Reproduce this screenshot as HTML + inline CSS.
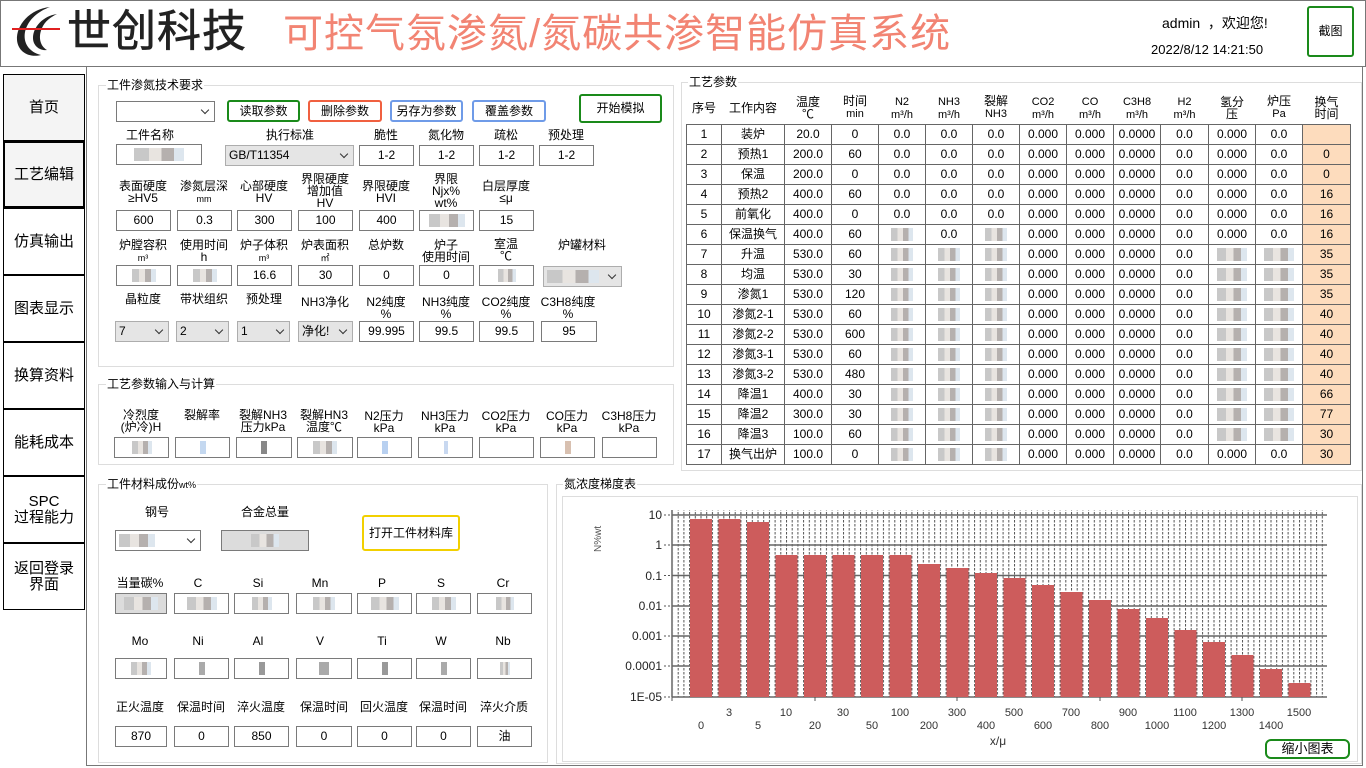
<!DOCTYPE html>
<html><head><meta charset="utf-8">
<style>
*{box-sizing:border-box;margin:0;padding:0}
body{width:1366px;height:768px;background:#fff;position:relative;overflow:hidden;font-family:"Liberation Sans","Noto Sans CJK SC",sans-serif;font-size:12px;color:#000}
.a{position:absolute}
.nav{position:absolute;left:3px;width:82px;border:1px solid #000;background:#fff;display:flex;align-items:center;justify-content:center;text-align:center;font-size:15px;line-height:16px}
.grp{position:absolute;border:1px solid #ddd}
.gt{position:absolute;top:-8px;left:7px;background:#fff;padding:0 1px;font-size:12px;line-height:14px}
.l{position:absolute;text-align:center;font-size:12px;line-height:12px;width:80px}
.i{position:absolute;border:1px solid #7a7a7a;background:#fff;text-align:center;font-size:12px;height:21px;line-height:19px}
.c{position:absolute;border:1px solid #adadad;background:#e5e5e5;font-size:12px;height:21px;line-height:19px;padding-left:3px}
.c:after{content:"";position:absolute;right:6px;top:5px;width:5px;height:5px;border-right:1px solid #333;border-bottom:1px solid #333;transform:rotate(45deg)}
.cw{background:#fff;border-color:#7a7a7a}
.btn{position:absolute;border:2px solid;border-radius:3px;background:#fff;text-align:center;font-size:12px}
.bl{display:inline-block;width:22px;height:13px;vertical-align:middle;background:linear-gradient(90deg,#c8c8c8 0 30%,#e8e4e0 30% 55%,#b5b0ae 55% 80%,#dde6ee 80%)}
table{border-collapse:collapse}
td{border:1px solid #666;height:20px;text-align:center;font-size:12px;padding:0;line-height:18px}
th{font-weight:normal;font-size:12px;line-height:12px;height:32px;text-align:center;vertical-align:middle}
th small{font-size:11px}
td.p{background:#fddcbd}
</style></head><body>

<div class="a" style="left:0;top:0;width:1366px;height:67px;border:1px solid #777"></div>
<svg class="a" style="left:10px;top:5px" width="56" height="54" viewBox="0 0 56 54">
<path d="M40 2 C20 4 6 20 7 35 C8 47 19 53 31 50 C19 47 13 38 15 27 C18 14 29 6 40 2Z" fill="#222"/>
<path d="M47 9 C33 11 23 22 23 33 C23 41 30 46 37 45 C30 41 28 32 32 23 C35 16 41 12 47 9Z" fill="#222"/>
<rect x="2" y="23" width="48" height="2" fill="#e02020"/>
</svg>
<div class="a" style="left:67px;top:7px;font-size:44px;line-height:50px;letter-spacing:1px;color:#222;-webkit-text-stroke:0.6px #222">世创科技</div>
<div class="a" style="left:283px;top:10px;font-size:40px;line-height:48px;letter-spacing:1px;color:#f28473">可控气氛渗氮/氮碳共渗智能仿真系统</div>
<div class="a" style="left:1162px;top:13px;font-size:14px">admin &nbsp;，欢迎您!</div>
<div class="a" style="left:1151px;top:42px;font-size:13px">2022/8/12 14:21:50</div>
<div class="btn" style="left:1307px;top:6px;width:47px;height:51px;border-color:#1a8a1a;line-height:47px;font-size:12px">截图</div>

<div class="a" style="left:86px;top:67px;width:1277px;height:699px;border-left:1px solid #777;border-right:1px solid #777;border-bottom:1px solid #777"></div>
<div class="nav" style="top:74px;height:67px;background:#f4f4f4">首页</div>
<div class="nav" style="top:141px;height:67px;background:#f4f4f4;border:2px solid #000">工艺编辑</div>
<div class="nav" style="top:208px;height:67px">仿真输出</div>
<div class="nav" style="top:275px;height:67px">图表显示</div>
<div class="nav" style="top:342px;height:67px">换算资料</div>
<div class="nav" style="top:409px;height:67px">能耗成本</div>
<div class="nav" style="top:476px;height:67px">SPC<br>过程能力</div>
<div class="nav" style="top:543px;height:67px">返回登录<br>界面</div>

<div class="grp" style="left:98px;top:85px;width:576px;height:282px"><div class="gt">工件渗氮技术要求</div></div>
<div class="c cw" style="left:116px;top:101px;width:99px"></div>
<div class="btn" style="left:227px;top:100px;width:73px;height:22px;border-color:#1a8a1a;line-height:18px">读取参数</div>
<div class="btn" style="left:308px;top:100px;width:74px;height:22px;border-color:#f06040;line-height:18px">删除参数</div>
<div class="btn" style="left:390px;top:100px;width:73px;height:22px;border-color:#6f9be8;line-height:18px">另存为参数</div>
<div class="btn" style="left:472px;top:100px;width:74px;height:22px;border-color:#6f9be8;line-height:18px">覆盖参数</div>
<div class="btn" style="left:579px;top:94px;width:83px;height:29px;border-color:#1a8a1a;line-height:25px">开始模拟</div>

<div class="l" style="left:110px;top:129px">工件名称</div>
<div class="l" style="left:250px;top:129px">执行标准</div>
<div class="l" style="left:346px;top:129px">脆性</div>
<div class="l" style="left:406px;top:129px">氮化物</div>
<div class="l" style="left:466px;top:129px">疏松</div>
<div class="l" style="left:526px;top:129px">预处理</div>
<div class="i" style="left:116px;top:144px;width:86px"><span class="bl" style="width:50px"></span></div>
<div class="c" style="left:225px;top:145px;width:129px;text-align:left">GB/T11354</div>
<div class="i" style="left:359px;top:145px;width:55px">1-2</div>
<div class="i" style="left:419px;top:145px;width:55px">1-2</div>
<div class="i" style="left:479px;top:145px;width:55px">1-2</div>
<div class="i" style="left:539px;top:145px;width:55px">1-2</div>

<div class="l" style="left:103px;top:180px">表面硬度<br>≥HV5</div>
<div class="l" style="left:164px;top:180px">渗氮层深<br><small style="font-size:9px">mm</small></div>
<div class="l" style="left:224px;top:180px">心部硬度<br>HV</div>
<div class="l" style="left:285px;top:173px">界限硬度<br>增加值<br>HV</div>
<div class="l" style="left:346px;top:180px">界限硬度<br>HVI</div>
<div class="l" style="left:406px;top:173px">界限<br>Njx%<br>wt%</div>
<div class="l" style="left:466px;top:180px">白层厚度<br>≤μ</div>
<div class="i" style="left:116px;top:210px;width:55px">600</div>
<div class="i" style="left:177px;top:210px;width:55px">0.3</div>
<div class="i" style="left:237px;top:210px;width:55px">300</div>
<div class="i" style="left:298px;top:210px;width:55px">100</div>
<div class="i" style="left:359px;top:210px;width:55px">400</div>
<div class="i" style="left:419px;top:210px;width:55px"><span class="bl" style="width:36px"></span></div>
<div class="i" style="left:479px;top:210px;width:55px">15</div>

<div class="l" style="left:103px;top:239px">炉膛容积<br><small style="font-size:9px">m³</small></div>
<div class="l" style="left:164px;top:239px">使用时间<br>h</div>
<div class="l" style="left:224px;top:239px">炉子体积<br><small style="font-size:9px">m³</small></div>
<div class="l" style="left:285px;top:239px">炉表面积<br><small style="font-size:9px">㎡</small></div>
<div class="l" style="left:346px;top:239px">总炉数</div>
<div class="l" style="left:406px;top:239px">炉子<br>使用时间</div>
<div class="l" style="left:466px;top:238px">室温<br>℃</div>
<div class="l" style="left:542px;top:239px">炉罐材料</div>
<div class="i" style="left:116px;top:265px;width:55px"><span class="bl" style="width:24px"></span></div>
<div class="i" style="left:177px;top:265px;width:55px"><span class="bl" style="width:24px"></span></div>
<div class="i" style="left:237px;top:265px;width:55px">16.6</div>
<div class="i" style="left:298px;top:265px;width:55px">30</div>
<div class="i" style="left:359px;top:265px;width:55px">0</div>
<div class="i" style="left:419px;top:265px;width:55px">0</div>
<div class="i" style="left:479px;top:265px;width:55px"><span class="bl" style="width:18px"></span></div>
<div class="c" style="left:543px;top:266px;width:79px"><span class="bl" style="width:52px"></span></div>

<div class="l" style="left:103px;top:293px">晶粒度</div>
<div class="l" style="left:164px;top:293px">带状组织</div>
<div class="l" style="left:224px;top:293px">预处理</div>
<div class="l" style="left:285px;top:296px">NH3净化</div>
<div class="l" style="left:346px;top:296px">N2纯度<br>%</div>
<div class="l" style="left:406px;top:296px">NH3纯度<br>%</div>
<div class="l" style="left:466px;top:296px">CO2纯度<br>%</div>
<div class="l" style="left:528px;top:296px">C3H8纯度<br>%</div>
<div class="c" style="left:115px;top:321px;width:54px">7</div>
<div class="c" style="left:176px;top:321px;width:53px">2</div>
<div class="c" style="left:237px;top:321px;width:53px">1</div>
<div class="c" style="left:298px;top:321px;width:55px">净化!</div>
<div class="i" style="left:359px;top:321px;width:55px">99.995</div>
<div class="i" style="left:419px;top:321px;width:55px">99.5</div>
<div class="i" style="left:479px;top:321px;width:55px">99.5</div>
<div class="i" style="left:541px;top:321px;width:56px">95</div>

<div class="grp" style="left:98px;top:384px;width:576px;height:81px"><div class="gt">工艺参数输入与计算</div></div>
<div class="l" style="left:101px;top:409px">冷烈度<br>(炉冷)H</div>
<div class="l" style="left:162px;top:409px">裂解率</div>
<div class="l" style="left:223px;top:409px">裂解NH3<br>压力kPa</div>
<div class="l" style="left:284px;top:409px">裂解HN3<br>温度℃</div>
<div class="l" style="left:344px;top:410px">N2压力<br>kPa</div>
<div class="l" style="left:405px;top:410px">NH3压力<br>kPa</div>
<div class="l" style="left:466px;top:410px">CO2压力<br>kPa</div>
<div class="l" style="left:527px;top:410px">CO压力<br>kPa</div>
<div class="l" style="left:589px;top:410px">C3H8压力<br>kPa</div>
<div class="i" style="left:114px;top:437px;width:55px"><span class="bl" style="width:20px"></span></div>
<div class="i" style="left:175px;top:437px;width:55px"><span class="bl" style="width:6px;background:#c4d8f0"></span></div>
<div class="i" style="left:236px;top:437px;width:56px"><span class="bl" style="width:6px;background:#888"></span></div>
<div class="i" style="left:297px;top:437px;width:56px"><span class="bl" style="width:24px"></span></div>
<div class="i" style="left:357px;top:437px;width:55px"><span class="bl" style="width:6px;background:#b8d0f0"></span></div>
<div class="i" style="left:418px;top:437px;width:55px"><span class="bl" style="width:4px;background:#c8d8f0"></span></div>
<div class="i" style="left:479px;top:437px;width:55px"></div>
<div class="i" style="left:540px;top:437px;width:55px"><span class="bl" style="width:6px;background:#d8c0b0"></span></div>
<div class="i" style="left:602px;top:437px;width:55px"></div>

<div class="grp" style="left:98px;top:484px;width:450px;height:279px"><div class="gt">工件材料成份<small style="font-size:9px">wt%</small></div></div>
<div class="l" style="left:117px;top:506px">钢号</div>
<div class="l" style="left:225px;top:506px">合金总量</div>
<div class="c cw" style="left:115px;top:530px;width:86px"><span class="bl" style="width:36px"></span></div>
<div class="i" style="left:221px;top:530px;width:88px;background:#dcdcdc"><span class="bl" style="width:28px"></span></div>
<div class="btn" style="left:362px;top:515px;width:98px;height:36px;border-color:#f2d000;line-height:32px">打开工件材料库</div>

<div class="l" style="left:100px;top:577px">当量碳%</div>
<div class="l" style="left:158px;top:577px">C</div>
<div class="l" style="left:218px;top:577px">Si</div>
<div class="l" style="left:280px;top:577px">Mn</div>
<div class="l" style="left:342px;top:577px">P</div>
<div class="l" style="left:401px;top:577px">S</div>
<div class="l" style="left:463px;top:577px">Cr</div>
<div class="i" style="left:115px;top:593px;width:52px;background:#dcdcdc"><span class="bl" style="width:34px"></span></div>
<div class="i" style="left:174px;top:593px;width:55px"><span class="bl" style="width:30px"></span></div>
<div class="i" style="left:234px;top:593px;width:55px"><span class="bl" style="width:20px"></span></div>
<div class="i" style="left:296px;top:593px;width:56px"><span class="bl" style="width:22px"></span></div>
<div class="i" style="left:357px;top:593px;width:55px"><span class="bl" style="width:28px"></span></div>
<div class="i" style="left:416px;top:593px;width:55px"><span class="bl" style="width:24px"></span></div>
<div class="i" style="left:477px;top:593px;width:55px"><span class="bl" style="width:18px"></span></div>

<div class="l" style="left:100px;top:635px">Mo</div>
<div class="l" style="left:158px;top:635px">Ni</div>
<div class="l" style="left:218px;top:635px">Al</div>
<div class="l" style="left:280px;top:635px">V</div>
<div class="l" style="left:342px;top:635px">Ti</div>
<div class="l" style="left:401px;top:635px">W</div>
<div class="l" style="left:463px;top:635px">Nb</div>
<div class="i" style="left:115px;top:658px;width:52px"><span class="bl" style="width:20px"></span></div>
<div class="i" style="left:174px;top:658px;width:55px"><span class="bl" style="width:6px;background:#aaa"></span></div>
<div class="i" style="left:234px;top:658px;width:55px"><span class="bl" style="width:6px;background:#999"></span></div>
<div class="i" style="left:296px;top:658px;width:56px"><span class="bl" style="width:10px;background:#aaa"></span></div>
<div class="i" style="left:357px;top:658px;width:55px"><span class="bl" style="width:6px;background:#999"></span></div>
<div class="i" style="left:416px;top:658px;width:55px"><span class="bl" style="width:6px;background:#aaa"></span></div>
<div class="i" style="left:477px;top:658px;width:55px"><span class="bl" style="width:10px"></span></div>

<div class="l" style="left:100px;top:701px">正火温度</div>
<div class="l" style="left:161px;top:701px">保温时间</div>
<div class="l" style="left:221px;top:701px">淬火温度</div>
<div class="l" style="left:284px;top:701px">保温时间</div>
<div class="l" style="left:344px;top:701px">回火温度</div>
<div class="l" style="left:403px;top:701px">保温时间</div>
<div class="l" style="left:464px;top:701px">淬火介质</div>
<div class="i" style="left:115px;top:726px;width:52px">870</div>
<div class="i" style="left:174px;top:726px;width:55px">0</div>
<div class="i" style="left:234px;top:726px;width:55px">850</div>
<div class="i" style="left:296px;top:726px;width:56px">0</div>
<div class="i" style="left:357px;top:726px;width:55px">0</div>
<div class="i" style="left:416px;top:726px;width:55px">0</div>
<div class="i" style="left:477px;top:726px;width:55px">油</div>

<div class="grp" style="left:681px;top:82px;width:681px;height:389px"><div class="gt" style="left:6px">工艺参数</div></div>
<table class="a" style="left:686px;top:92px;width:664px;table-layout:fixed">
<colgroup><col style="width:35px"><col style="width:63px"><col style="width:47px"><col style="width:47px"><col style="width:47px"><col style="width:47px"><col style="width:47px"><col style="width:47px"><col style="width:47px"><col style="width:47px"><col style="width:48px"><col style="width:47px"><col style="width:47px"><col style="width:48px"></colgroup>
<tr><th>序号</th><th>工作内容</th><th>温度<br>℃</th><th>时间<br><small>min</small></th><th><small>N2<br>m³/h</small></th><th><small>NH3<br>m³/h</small></th><th>裂解<br><small>NH3</small></th><th><small>CO2<br>m³/h</small></th><th><small>CO<br>m³/h</small></th><th><small>C3H8<br>m³/h</small></th><th><small>H2<br>m³/h</small></th><th>氢分<br>压</th><th>炉压<br><small>Pa</small></th><th>换气<br>时间</th></tr>
<tr><td>1</td><td>装炉</td><td>20.0</td><td>0</td><td>0.0</td><td>0.0</td><td>0.0</td><td>0.000</td><td>0.000</td><td>0.0000</td><td>0.0</td><td>0.000</td><td>0.0</td><td class="p"></td></tr>
<tr><td>2</td><td>预热1</td><td>200.0</td><td>60</td><td>0.0</td><td>0.0</td><td>0.0</td><td>0.000</td><td>0.000</td><td>0.0000</td><td>0.0</td><td>0.000</td><td>0.0</td><td class="p">0</td></tr>
<tr><td>3</td><td>保温</td><td>200.0</td><td>0</td><td>0.0</td><td>0.0</td><td>0.0</td><td>0.000</td><td>0.000</td><td>0.0000</td><td>0.0</td><td>0.000</td><td>0.0</td><td class="p">0</td></tr>
<tr><td>4</td><td>预热2</td><td>400.0</td><td>60</td><td>0.0</td><td>0.0</td><td>0.0</td><td>0.000</td><td>0.000</td><td>0.0000</td><td>0.0</td><td>0.000</td><td>0.0</td><td class="p">16</td></tr>
<tr><td>5</td><td>前氧化</td><td>400.0</td><td>0</td><td>0.0</td><td>0.0</td><td>0.0</td><td>0.000</td><td>0.000</td><td>0.0000</td><td>0.0</td><td>0.000</td><td>0.0</td><td class="p">16</td></tr>
<tr><td>6</td><td>保温换气</td><td>400.0</td><td>60</td><td><span class="bl"></span></td><td>0.0</td><td><span class="bl"></span></td><td>0.000</td><td>0.000</td><td>0.0000</td><td>0.0</td><td>0.000</td><td>0.0</td><td class="p">16</td></tr>
<tr><td>7</td><td>升温</td><td>530.0</td><td>60</td><td><span class="bl"></span></td><td><span class="bl"></span></td><td><span class="bl"></span></td><td>0.000</td><td>0.000</td><td>0.0000</td><td>0.0</td><td><span class="bl" style="width:30px"></span></td><td><span class="bl" style="width:30px"></span></td><td class="p">35</td></tr>
<tr><td>8</td><td>均温</td><td>530.0</td><td>30</td><td><span class="bl"></span></td><td><span class="bl"></span></td><td><span class="bl"></span></td><td>0.000</td><td>0.000</td><td>0.0000</td><td>0.0</td><td><span class="bl" style="width:30px"></span></td><td><span class="bl" style="width:30px"></span></td><td class="p">35</td></tr>
<tr><td>9</td><td>渗氮1</td><td>530.0</td><td>120</td><td><span class="bl"></span></td><td><span class="bl"></span></td><td><span class="bl"></span></td><td>0.000</td><td>0.000</td><td>0.0000</td><td>0.0</td><td><span class="bl" style="width:30px"></span></td><td><span class="bl" style="width:30px"></span></td><td class="p">35</td></tr>
<tr><td>10</td><td>渗氮2-1</td><td>530.0</td><td>60</td><td><span class="bl"></span></td><td><span class="bl"></span></td><td><span class="bl"></span></td><td>0.000</td><td>0.000</td><td>0.0000</td><td>0.0</td><td><span class="bl" style="width:30px"></span></td><td><span class="bl" style="width:30px"></span></td><td class="p">40</td></tr>
<tr><td>11</td><td>渗氮2-2</td><td>530.0</td><td>600</td><td><span class="bl"></span></td><td><span class="bl"></span></td><td><span class="bl"></span></td><td>0.000</td><td>0.000</td><td>0.0000</td><td>0.0</td><td><span class="bl" style="width:30px"></span></td><td><span class="bl" style="width:30px"></span></td><td class="p">40</td></tr>
<tr><td>12</td><td>渗氮3-1</td><td>530.0</td><td>60</td><td><span class="bl"></span></td><td><span class="bl"></span></td><td><span class="bl"></span></td><td>0.000</td><td>0.000</td><td>0.0000</td><td>0.0</td><td><span class="bl" style="width:30px"></span></td><td><span class="bl" style="width:30px"></span></td><td class="p">40</td></tr>
<tr><td>13</td><td>渗氮3-2</td><td>530.0</td><td>480</td><td><span class="bl"></span></td><td><span class="bl"></span></td><td><span class="bl"></span></td><td>0.000</td><td>0.000</td><td>0.0000</td><td>0.0</td><td><span class="bl" style="width:30px"></span></td><td><span class="bl" style="width:30px"></span></td><td class="p">40</td></tr>
<tr><td>14</td><td>降温1</td><td>400.0</td><td>30</td><td><span class="bl"></span></td><td><span class="bl"></span></td><td><span class="bl"></span></td><td>0.000</td><td>0.000</td><td>0.0000</td><td>0.0</td><td><span class="bl" style="width:30px"></span></td><td><span class="bl" style="width:30px"></span></td><td class="p">66</td></tr>
<tr><td>15</td><td>降温2</td><td>300.0</td><td>30</td><td><span class="bl"></span></td><td><span class="bl"></span></td><td><span class="bl"></span></td><td>0.000</td><td>0.000</td><td>0.0000</td><td>0.0</td><td><span class="bl" style="width:30px"></span></td><td><span class="bl" style="width:30px"></span></td><td class="p">77</td></tr>
<tr><td>16</td><td>降温3</td><td>100.0</td><td>60</td><td><span class="bl"></span></td><td><span class="bl"></span></td><td><span class="bl"></span></td><td>0.000</td><td>0.000</td><td>0.0000</td><td>0.0</td><td><span class="bl" style="width:30px"></span></td><td><span class="bl" style="width:30px"></span></td><td class="p">30</td></tr>
<tr><td>17</td><td>换气出炉</td><td>100.0</td><td>0</td><td><span class="bl"></span></td><td><span class="bl"></span></td><td><span class="bl"></span></td><td>0.000</td><td>0.000</td><td>0.0000</td><td>0.0</td><td>0.000</td><td>0.0</td><td class="p">30</td></tr>
</table>

<div class="grp" style="left:556px;top:484px;width:806px;height:280px"><div class="gt" style="left:6px">氮浓度梯度表</div></div>
<div class="a" style="left:562px;top:496px;width:796px;height:266px;border:1px solid #ddd"></div>
<svg class="a" style="left:562px;top:496px" width="796" height="266" viewBox="562 496 796 266" font-family="Liberation Sans, sans-serif" font-size="12">
<defs><pattern id="vg" x="672" y="0" width="5.7" height="4" patternUnits="userSpaceOnUse"><rect x="0" y="0" width="1" height="2.5" fill="#555"/></pattern></defs>
<rect x="673" y="510" width="654" height="187" fill="url(#vg)"/>
<g stroke="#666" stroke-width="1.5">
<line x1="672" y1="515" x2="1327" y2="515"/><line x1="672" y1="545" x2="1327" y2="545"/><line x1="672" y1="575.5" x2="1327" y2="575.5"/><line x1="672" y1="606" x2="1327" y2="606"/><line x1="672" y1="636" x2="1327" y2="636"/><line x1="672" y1="666" x2="1327" y2="666"/><line x1="672" y1="697" x2="1327" y2="697"/>
<line x1="672" y1="510" x2="672" y2="697"/>
</g>
<g stroke="#555" stroke-dasharray="2,2"><line x1="664" y1="515" x2="672" y2="515"/><line x1="664" y1="545" x2="672" y2="545"/><line x1="664" y1="575.5" x2="672" y2="575.5"/><line x1="664" y1="606" x2="672" y2="606"/><line x1="664" y1="636" x2="672" y2="636"/><line x1="664" y1="666" x2="672" y2="666"/><line x1="664" y1="697" x2="672" y2="697"/></g>
<g stroke="#555"><line x1="672" y1="697" x2="672" y2="701"/><line x1="815" y1="697" x2="815" y2="701"/><line x1="957" y1="697" x2="957" y2="701"/><line x1="1100" y1="697" x2="1100" y2="701"/><line x1="1242" y1="697" x2="1242" y2="701"/></g>
<g fill="#cd5c5c">
<rect x="690" y="519" width="22" height="178"/><rect x="718.5" y="519" width="22" height="178"/><rect x="747" y="522" width="22" height="175"/><rect x="775.5" y="555" width="22" height="142"/><rect x="804" y="555" width="22" height="142"/><rect x="832.5" y="555" width="22" height="142"/><rect x="861" y="555" width="22" height="142"/><rect x="889.5" y="555" width="22" height="142"/><rect x="918" y="564" width="22" height="133"/><rect x="946.5" y="568" width="22" height="129"/><rect x="975" y="573" width="22" height="124"/><rect x="1003.5" y="578" width="22" height="119"/><rect x="1032" y="585" width="22" height="112"/><rect x="1060.5" y="592" width="22" height="105"/><rect x="1089" y="600" width="22" height="97"/><rect x="1117.5" y="609" width="22" height="88"/><rect x="1146" y="618" width="22" height="79"/><rect x="1174.5" y="630" width="22" height="67"/><rect x="1203" y="642" width="22" height="55"/><rect x="1231.5" y="655" width="22" height="42"/><rect x="1260" y="669" width="22" height="28"/><rect x="1288.5" y="683" width="22" height="14"/>
</g>
<g fill="#222" text-anchor="end">
<text x="662" y="519">10</text><text x="662" y="549">1</text><text x="662" y="580">0.1</text><text x="662" y="610">0.01</text><text x="662" y="640">0.001</text><text x="662" y="670">0.0001</text><text x="662" y="701">1E-05</text>
</g>
<g fill="#333" text-anchor="middle" font-size="11">
<text x="729" y="716">3</text><text x="786" y="716">10</text><text x="843" y="716">30</text><text x="900" y="716">100</text><text x="957" y="716">300</text><text x="1014" y="716">500</text><text x="1071" y="716">700</text><text x="1128" y="716">900</text><text x="1185" y="716">1100</text><text x="1242" y="716">1300</text><text x="1299" y="716">1500</text>
<text x="701" y="729">0</text><text x="758" y="729">5</text><text x="815" y="729">20</text><text x="872" y="729">50</text><text x="929" y="729">200</text><text x="986" y="729">400</text><text x="1043" y="729">600</text><text x="1100" y="729">800</text><text x="1157" y="729">1000</text><text x="1214" y="729">1200</text><text x="1271" y="729">1400</text>
<text x="998" y="745" font-size="12">x/μ</text>
</g>
<text x="0" y="0" font-size="10" fill="#555" transform="translate(601,552) rotate(-90)">N%wt</text>
</svg>
<div class="btn" style="left:1265px;top:739px;width:85px;height:20px;border-color:#1a8a1a;border-radius:6px;line-height:16px;font-size:13px">缩小图表</div>

</body></html>
